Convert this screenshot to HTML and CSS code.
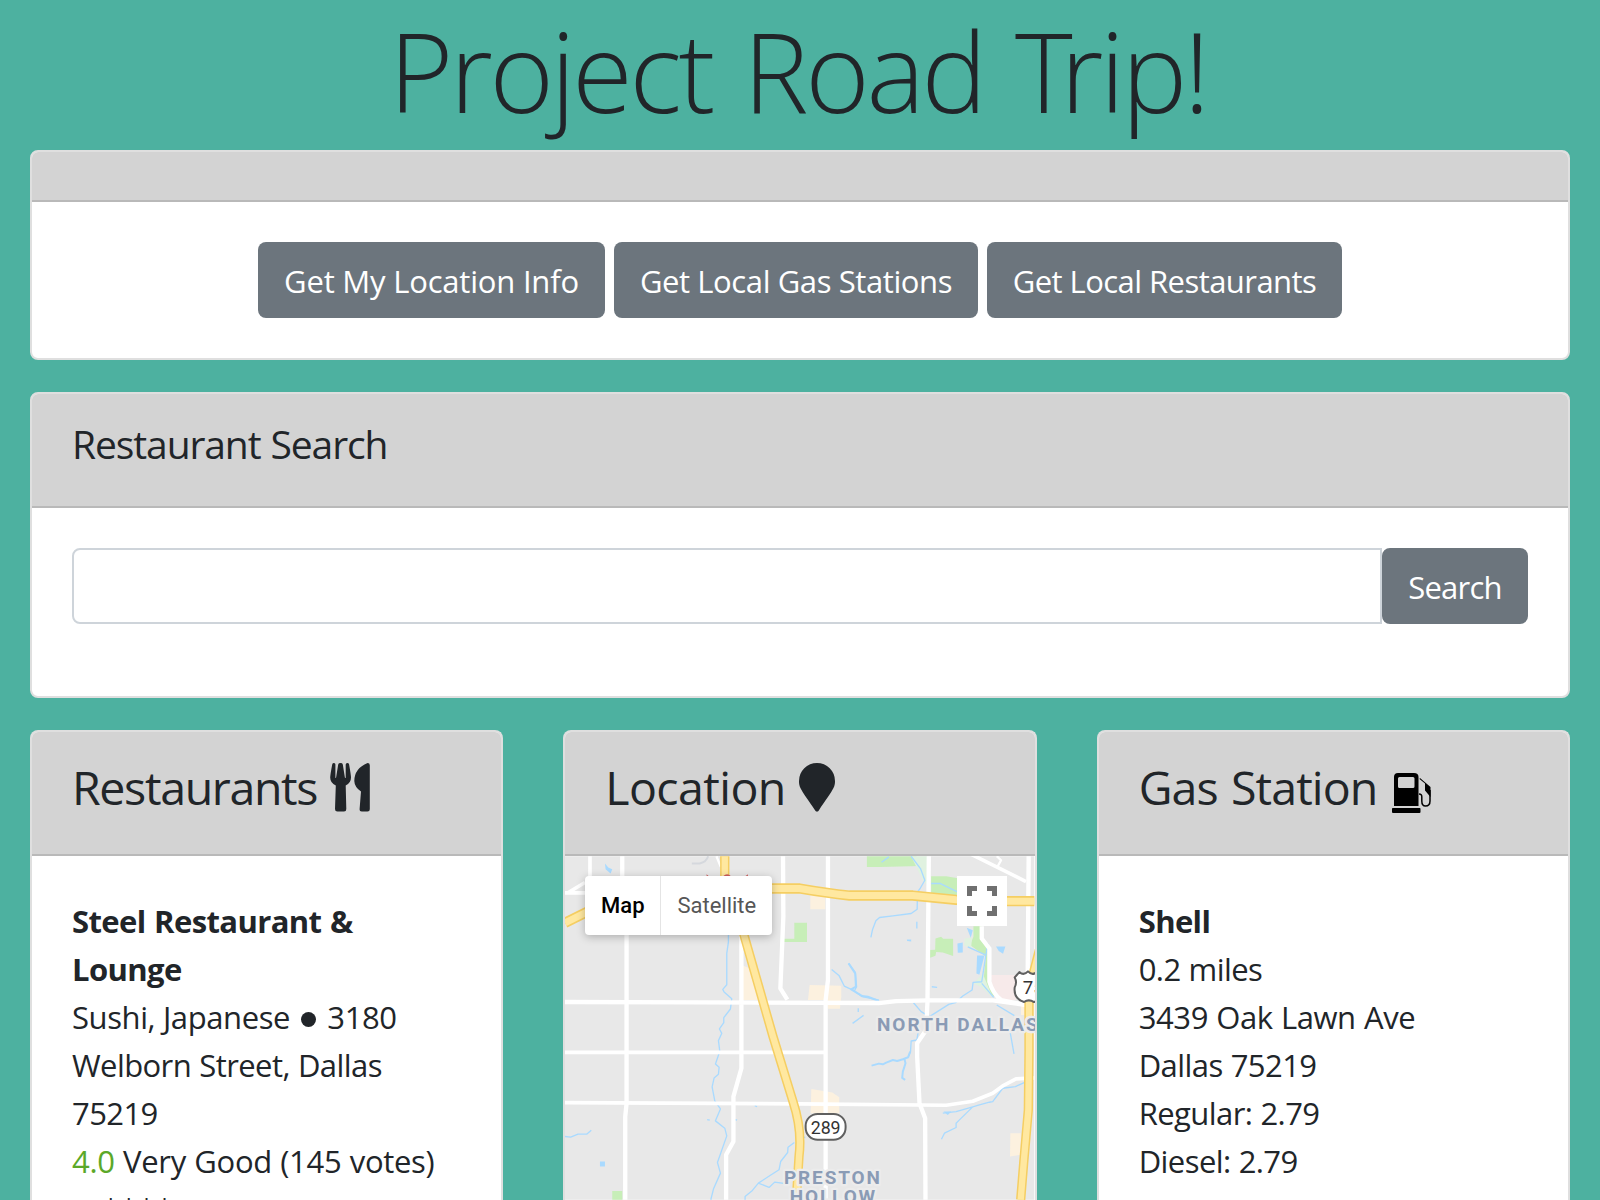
FILE: index.html
```html
<!DOCTYPE html>
<html lang="en">
<head>
<meta charset="utf-8">
<title>Project Road Trip!</title>
<link rel="stylesheet" href="styles.css">
</head>
<body>
<main class="container">
  <h1 class="title">Project Road <span class="kern">T</span>rip!</h1>

  <section class="card">
    <div class="card-header empty"></div>
    <div class="card-body actions">
      <button class="btn loc">Get My Location Info</button>
      <button class="btn gas">Get Local Gas Stations</button>
      <button class="btn rest">Get Local Restaurants</button>
    </div>
  </section>

  <section class="card">
    <div class="card-header"><h5 class="search-title">Restaurant Search</h5></div>
    <div class="card-body search-body">
      <form class="search"><input class="field" type="text" aria-label="Restaurant search"><button class="btn find" type="button">Search</button></form>
    </div>
  </section>

  <div class="columns">
    <section class="card tall">
      <div class="card-header"><h4 class="heading"><span class="h-rest">Restaurants</span>
        <svg class="icon utensils" viewBox="0 0 40 49" fill="#212529"><path d="M2.2 1.4Q2.5 0 4 0Q5.4 0 5.4 1.5V14.6Q5.5 15.6 6.1 14.6L8.2 1.4Q8.5 0 10.5 0Q12.5 0 12.8 1.4L14.9 14.6Q15.4 15.6 15.7 14.6V1.5Q15.8 0 17.3 0Q18.8 0 19.1 1.4Q21 12 21 14.5Q21 20 15.7 22.5L16.3 46Q16.3 48.5 14 48.5H7.4Q5 48.5 5 46L5.8 22.5Q.2 20 .2 14.5Q.2 12 2.2 1.4Z"/><path d="M37.6 0Q39.8 0 39.8 2.2V46.2Q39.8 48.5 37.5 48.5H31.8Q29.4 48.5 29.6 46L31 28.6Q24.5 24 24.3 18Q24.3 5.5 37.6 0Z"/></svg></h4></div>
      <div class="card-body listing">
        <p><b>Steel Restaurant &amp;<br>Lounge</b><br>
        <span class="cuisine">Sushi, Japanese <i class="dot"></i> 3180</span><br>Welborn Street, Dallas<br>75219<br>
        <span class="rating"><span class="score">4.0</span> Very Good (145 votes)</span><br><span class="price">$$$$</span></p>
      </div>
    </section>

    <section class="card tall">
      <div class="card-header"><h4 class="heading"><span class="h-loc">Location</span>
        <svg class="icon pin" viewBox="0 0 36 49" fill="#212529"><path d="M18 0A18 18 0 0 1 36 18C36 24.5 34.4 26 19.8 47.4Q18 49.8 16.2 47.4C1.6 26 0 24.5 0 18A18 18 0 0 1 18 0Z"/></svg></h4></div>
      <div class="map">
        <svg class="map-canvas" viewBox="15 18 1410 1032" fill="none" stroke-linejoin="round">
          <rect x="15" y="18" width="1410" height="1032" fill="#e8e8e8"/>
          <g fill="#c7eeb8">
            <path d="M922 18H1070L1085 47L960 50L922 50Z"/><path fill="#e0f2e0" d="M1055 18H1104V105L1090 90Z"/>
            <path d="M1115 78H1160L1200 85V145L1115 130ZM704 218H742V276H672V266H704ZM1128 265L1145 260L1151 266H1181V318L1150 307L1130 306L1128 317L1112 323V300L1127 299ZM1242 228H1266V262L1288 300V390L1305 440L1270 410L1280 320L1232 285L1242 260ZM157 1024H187V1050H157Z"/>
            <path fill="#e0f2e0" d="M1216 265L1238 262L1235 293L1214 286ZM1242 400L1270 370L1300 443L1265 410Z"/>
          </g>
          <g fill="#fcf1df">
            <path d="M752 130H797V177H752ZM750 405L845 407V440L841 476H805V450H745ZM755 717L818 728L839 742V790H753ZM1353 850H1384V915L1352 920ZM545 345L572 355L602 450H550ZM1385 465H1425V495H1385Z"/>
            <path fill="#f7eaea" d="M1295 375H1370V450H1325L1297 410Z"/>
          </g>
          <g fill="#a9daff">
            <path d="M1194 280L1210 277L1210 307L1195 308ZM1310 289L1338 289L1331 311L1318 303ZM1253 316H1275L1260 374L1251 370ZM1222 233L1240 240L1234 263ZM120 935H135V950H120ZM135 40L145 52L157 57L152 70L137 57ZM1042 268H1055V274L1043 273ZM1152 785L1176 785L1165 795Z"/>
          </g>
          <g stroke="#a9daff" stroke-width="4">
            <path d="M506 250V275L501 310V404L489 418L493 426L516 446L512 477L492 503V518L479 537L486 550L476 572L480 604L467 642L478 652L476 673L463 684L457 711L465 753L482 777L467 813L495 835L501 858L473 938L482 970L461 1018L453 1050"/>
            <path d="M704 878L685 892L684 908L663 935L658 960L631 977L596 1000L578 1022L556 1040V1050M596 1000L628 1013L645 997L680 1002M15 860L32 862L54 853H80L94 841M442 809L450 811M526 809L532 811M585 767L592 770"/>
            <path d="M1055 18L1083 55L1096 90L1082 115L1074 125L1073 177L1055 190L1000 197L960 202L949 212L939 238L934 262M966 36L988 20M1115 100L1143 100L1200 128M1072 215V235M816 358L838 376L854 408L880 420L908 440L958 450M867 340L887 367L891 410L883 425M896 475V486M879 520L912 496M1062 458L1085 485L1110 500L1168 463L1188 458L1210 438L1238 420L1241 397L1267 395L1285 280M1225 290L1280 315M1267 400L1303 442M1312 465L1365 497M1352 545L1364 612M1078 535L1072 570L1055 573L1053 605L1046 620"/>
            <path stroke-width="6" d="M1052 605L1046 622L1030 628L1013 633L1000 630L980 638L970 643L958 641L936 647M1035 628L1038 640L1030 665L1028 684L1037 690M867 340L887 370L889 410L875 418L908 438L925 440L958 453"/>
            <path d="M1117 410L1133 412M1150 790L1190 785L1240 771L1260 765L1290 757L1300 755L1330 715L1368 710L1400 696M1240 771L1200 810L1190 820V833L1155 850L1146 868M720 860L737 863"/>
          </g>
          <path d="M396 40H420Q440 35 445 18" stroke="#d5d8dd" stroke-width="6"/>
          <g stroke="#fff" stroke-width="13">
            <path d="M187 18V90M200 250V760L196 800V1050M670 18L671 200L662 415L683 449M805 18V390L798 450V1050M1108 18L1104 455L1100 540L1073 580V620L1080 760L1097 805L1098 1050M1408 18L1405 370"/>
            <path d="M545 250V655L521 740V875L499 915V1050M1267 228V265L1290 295V395Q1300 430 1325 450L1400 465M15 456L410 457L958 459L1010 453L1104 451H1300L1400 465"/>
            <path stroke-width="11" d="M90 18V90M15 128H80M25 127L75 97M15 607H795M15 758L720 762L1160 766L1240 754L1300 730L1330 708L1370 687L1425 684M1235 12L1400 94"/>
            <path stroke-width="7" d="M1312 18L1325 30L1315 48M470 18L483 50"/>
          </g>
          <g stroke="#f5ce62" stroke-width="31">
            <path d="M15 218L110 171M636 115H720Q800 129 870 136H1060L1190 149L1300 153H1425"/><path stroke-width="28" d="M495 18V90Q500 130 550 245L640 560L700 755Q728 840 718 920L710 1050M1440 300L1409 420V600L1407 780L1393 940L1384 1050"/>
          </g>
          <g stroke="#ffe8a0" stroke-width="21">
            <path d="M15 218L110 171M636 115H720Q800 129 870 136H1060L1190 149L1300 153H1425"/><path stroke-width="19" d="M495 18V90Q500 130 550 245L640 560L700 755Q728 840 718 920L710 1050M1440 300L1409 420V600L1407 780L1393 940L1384 1050"/>
          </g>
          <path fill="#cf5d5d" d="M440 72L450 80H441ZM490 78Q502 66 514 78ZM565 72L553 80H564Z"/>
          <rect x="738" y="792" width="120" height="78" rx="36" fill="#fff" stroke="#606060" stroke-width="6"/>
          <path d="M1380 366Q1393 378 1406 364Q1419 378 1432 366L1446 378Q1438 392 1446 410Q1450 446 1424 456Q1408 446 1394 456Q1362 446 1366 412Q1374 396 1366 382Z" fill="#fff" stroke="#606060" stroke-width="6"/>
          <g class="map-num"><text x="753" y="851" textLength="90" lengthAdjust="spacingAndGlyphs">289</text><text x="1390" y="432">75</text></g>
          <g class="map-label"><text x="952" y="542" textLength="486">NORTH DALLAS</text><text x="673" y="1004" textLength="291">PRESTON</text><text x="690" y="1061" textLength="260">HOLLOW</text></g>
        </svg>
        <div class="map-type"><span class="on">Map</span><span class="off">Satellite</span></div>
        <div class="full"><svg viewBox="0 0 30 30" fill="none" stroke="#707070" stroke-width="5"><path d="M2.500 10V2.500H10M20 2.500H27.500V10M27.500 20V27.500H20M10 27.500H2.500V20"/></svg></div>
      </div>
    </section>

    <section class="card tall">
      <div class="card-header"><h4 class="heading"><span class="h-gas">Gas Station</span>
        <svg class="icon pump" viewBox="0 0 39 40"><path fill-rule="evenodd" d="M2 33V4Q2 0 6 0H22Q26.5 0 26.5 4V33ZM7.5 4Q6 4 6 5.500V13.500Q6 15 7.500 15H21Q22.500 15 22.500 13.500V5.500Q22.500 4 21 4ZM.8 35H27.700Q28.500 35 28.500 35.800V39Q28.500 40 27.500 40H1Q0 40 0 39V35.800Q0 35 .8 35Z"/><path d="M28 5L38.500 14V24L33 17.500V10.500L27.500 6Z"/><path d="M27 21Q30 21 29.800 24V28Q29.800 33 33.500 33Q38 33 38 28V17" fill="none" stroke="#000" stroke-width="1.500"/></svg></h4></div>
      <div class="card-body listing">
        <p><b>Shell</b><br>0.2 miles<br><span class="street">3439 Oak Lawn Ave</span><br>Dallas 75219<br>Regular: 2.79<br>Diesel: 2.79</p>
      </div>
    </section>
  </div>
</main>
</body>
</html>
```
FILE: styles.css
```css
* { box-sizing: border-box; }
html { overflow: hidden; }
body { margin: 0; height: 1200px; overflow: hidden; background: #4db1a0; color: #212529; font: 31px/48px "Open Sans", "Noto Sans", sans-serif; font-stretch: 93%; }
.container { padding: 0 30px; }
.title { margin: 0 4px 0 0; height: 150px; padding-top: 3px; font-size: 110px; line-height: 134px; font-weight: 300; text-align: center; letter-spacing: -3.3px; word-spacing: 6px; white-space: nowrap; }
.kern { letter-spacing: -12px; }
.card { background: #fff; border: 2px solid #dfdfdf; border-radius: 8px; margin-bottom: 32px; overflow: hidden; }
.card-header { background: #d3d3d3; border-bottom: 2px solid #b9b9b9; padding: 24px 40px; }
.empty { height: 50px; }
.card-body { padding: 40px; }
.actions { display: flex; justify-content: center; gap: 9px; height: 156px; }
.btn { height: 76px; border: 0; border-radius: 8px; background: #6c757d; color: #fff; font: inherit; padding: 1px 0 0; text-align: center; white-space: nowrap; }
.loc { width: 347px; letter-spacing: -.2px; }
.gas { width: 364px; letter-spacing: -.4px; }
.rest { width: 355px; letter-spacing: -.55px; }
.search-title { margin: 0 0 16px; font-size: 39px; line-height: 52px; height: 48px; font-weight: 400; letter-spacing: -1.1px; word-spacing: 1px; }
.search-body { height: 188px; }
.search { display: flex; }
.field { flex: 1; height: 76px; border: 2px solid #ced4da; border-radius: 8px 0 0 8px; padding: 12px 24px; font: inherit; }
.find { width: 146px; letter-spacing: -.8px; }
.columns { display: grid; grid-template-columns: repeat(3, 1fr); gap: 60px; }
.tall { height: 470px; border-bottom: 0; border-radius: 8px 8px 0 0; margin-bottom: 0; }
.heading { display: flex; margin: 0; height: 74px; font-size: 46.5px; line-height: 62px; font-weight: 400; white-space: nowrap; }
.icon { flex: none; margin-top: 7px; }
.h-rest { width: 258px; letter-spacing: -1.35px; }
.h-loc { width: 194px; letter-spacing: -.6px; }
.h-gas { width: 252px; letter-spacing: -.9px; word-spacing: 2px; }
.utensils { width: 40px; height: 49px; }
.pin { width: 36px; height: 49px; }
.pump { width: 39px; height: 40px; margin: 17px 0 0 1px; }
.listing { padding-top: 41px; }
.listing p { margin: 0; white-space: nowrap; letter-spacing: -.57px; word-spacing: .6px; }
.listing b { letter-spacing: -.6px; word-spacing: 1px; }
.listing .cuisine, .listing .street { letter-spacing: -.4px; }
.listing .cuisine { word-spacing: 0; }
.listing .rating { letter-spacing: -.3px; }
.dot { display: inline-block; width: 15px; height: 15px; margin: 0 4px 2px 3px; border-radius: 50%; background: #212529; }
.score { color: #5ba829; }
.listing .price { padding-left: 30px; letter-spacing: .2px; }
.map { position: relative; height: 344px; }
.map-canvas { display: block; width: 100%; height: 344px; }
.map-num { font: 56px Roboto, sans-serif; fill: #333; }
.map-label { font: 700 57px Roboto, sans-serif; fill: #8a9bb5; stroke: #ececec; stroke-width: 14px; paint-order: stroke; letter-spacing: 3px; }
.map-type { position: absolute; left: 20px; top: 20px; display: flex; height: 59px; background: #fff; border-radius: 4px; box-shadow: 0 2px 8px rgba(0,0,0,.25); font: 22px/59px Roboto, sans-serif; text-align: center; }
.on { width: 76px; color: #000; font-weight: 500; border-right: 1px solid #e4e4e4; }
.off { width: 111px; color: #565656; }
.full { position: absolute; right: 28px; top: 20px; width: 50px; height: 50px; padding: 10px; background: #fff; }
.full svg { display: block; width: 30px; height: 30px; }
```
